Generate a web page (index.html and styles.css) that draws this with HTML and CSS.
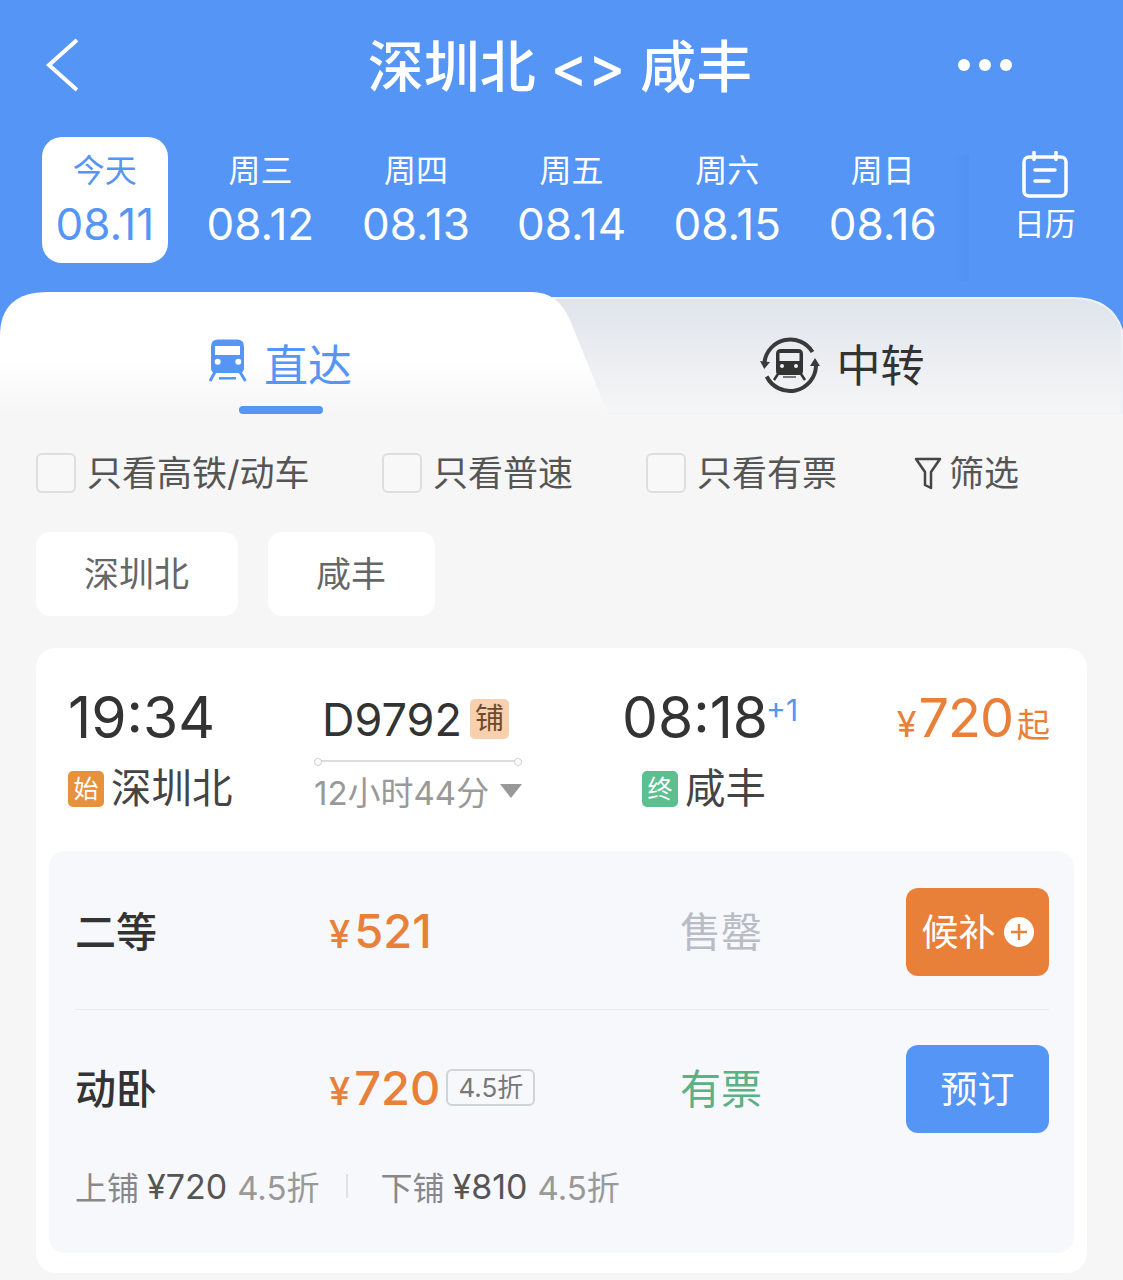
FILE: index.html
```html
<!DOCTYPE html>
<html lang="zh-CN">
<head>
    <meta charset="UTF-8">
    <meta name="viewport" content="width=device-width, initial-scale=1.0">
    <title>深圳北 - 咸丰</title>
    <link rel="stylesheet" href="styles.css">
</head>
<body>
<div class="page">

    <!-- Blue header -->
    <div class="header">
        <div class="title-bar">
            <svg class="back-icon" width="40" height="60" viewBox="0 0 40 60"><polyline points="33,5 5,30 33,55" fill="none" stroke="#fff" stroke-width="4"/></svg>
            <div class="title">深圳北 &lt;&gt; 咸丰</div>
            <div class="more-dots"><span></span><span></span><span></span></div>
        </div>
        <div class="date-row">
            <div class="date-cell active"><div class="day">今天</div><div class="date">08.11</div></div>
            <div class="date-cell"><div class="day">周三</div><div class="date">08.12</div></div>
            <div class="date-cell"><div class="day">周四</div><div class="date">08.13</div></div>
            <div class="date-cell"><div class="day">周五</div><div class="date">08.14</div></div>
            <div class="date-cell"><div class="day">周六</div><div class="date">08.15</div></div>
            <div class="date-cell"><div class="day">周日</div><div class="date">08.16</div></div>
            <div class="calendar-cell">
                <svg width="48" height="48" viewBox="0 0 48 48" fill="none" stroke="#fff" stroke-width="3.5"><rect x="3" y="6" width="42" height="39" rx="5"/><path d="M13 1.5v7M35 1.5v7M14 19h20M14 30h14" stroke-linecap="round"/></svg>
                <div class="calendar-label">日历</div>
            </div>
        </div>
    </div>

    <!-- Direct / transfer tabs -->
    <div class="tabs">
        <svg class="tabs-bg" width="1123" height="122" viewBox="0 0 1123 122">
            <defs>
                <linearGradient id="tabLeft" x1="0" y1="0" x2="0" y2="1"><stop offset="0.55" stop-color="#fff"/><stop offset="1" stop-color="#f6f6f6"/></linearGradient>
                <linearGradient id="tabRight" x1="0" y1="0" x2="0" y2="1"><stop offset="0" stop-color="#dfe4ec"/><stop offset="1" stop-color="#f6f6f6"/></linearGradient>
            </defs>
            <path d="M520 6H1072Q1112 6 1122 38V122H520Z" fill="url(#tabRight)" stroke="#eef1f6" stroke-width="2"/>
            <path d="M0 122V44Q0 0 48 0H532Q558 0 570 28L608 122Z" fill="url(#tabLeft)"/>
        </svg>
        <div class="tab tab-active">
            <div class="tab-label">
                <svg width="38" height="44" viewBox="0 0 38 44"><path d="M9 0.5H28Q35 0.5 35 7.5V29Q35 34 30 34H7Q2 34 2 29V7.5Q2 0.5 9 0.5ZM6 7V16H31V7Z" fill="#5595f5" fill-rule="evenodd"/><circle cx="8.7" cy="22.7" r="3" fill="#fff"/><circle cx="29.3" cy="22.7" r="3" fill="#fff"/><path d="M6 33L1 42M31 33L36.500 42" fill="none" stroke="#5595f5" stroke-width="3"/><path d="M10 39.300H27" fill="none" stroke="#5595f5" stroke-width="2.500"/></svg>
                <span>直达</span>
            </div>
            <div class="tab-line"></div>
        </div>
        <div class="tab">
            <div class="tab-label">
                <svg class="transfer-icon" width="60" height="60" viewBox="0 0 60 60"><path d="M4.500 27A26 26 0 0 1 52.500 17M56 31A26 26 0 0 1 6.700 41.500" fill="none" stroke="#3a3a3a" stroke-width="4"/><path d="M0 26L10 27L4.300 34ZM55 23L60 31L50 31Z" fill="#3a3a3a"/><path d="M21 14H38Q43 14 43 19V36Q43 40 39 40H20Q16 40 16 36V19Q16 14 21 14ZM19.500 18V26H39.500V18Z" fill="#333" fill-rule="evenodd"/><circle cx="22" cy="31" r="2" fill="#f2f3f5"/><circle cx="36" cy="31" r="2" fill="#f2f3f5"/><path d="M18 39L14 45M41 39L45 45" fill="none" stroke="#333" stroke-width="2.500"/><path d="M23 42H36" fill="none" stroke="#777" stroke-width="2"/></svg>
                <span>中转</span>
            </div>
        </div>
    </div>

    <!-- Filter checkboxes -->
    <div class="filters">
        <div class="check-item item-one"><span class="checkbox"></span><span class="check-text">只看高铁/动车</span></div>
        <div class="check-item item-two"><span class="checkbox"></span><span class="check-text">只看普速</span></div>
        <div class="check-item item-three"><span class="checkbox"></span><span class="check-text">只看有票</span></div>
        <div class="filter-btn">
            <svg width="28" height="34" viewBox="0 0 28 34"><path d="M2 3H26L17 16V32L11 29V16Z" fill="none" stroke="#444" stroke-width="2.500" stroke-linejoin="round"/></svg>
            <span class="check-text">筛选</span>
        </div>
    </div>

    <div class="stations">
        <div class="station-chip">深圳北</div>
        <div class="station-chip">咸丰</div>
    </div>

    <!-- Train card -->
    <div class="card">
        <div class="train-info">
            <div class="cell">
                <div class="time">19:34</div>
                <div class="place"><span class="mark mark-start">始</span>深圳北</div>
            </div>
            <div class="cell">
                <div class="train-no">D9792<span class="berth-tag">铺</span></div>
                <div class="duration-line"></div>
                <div class="duration">12小时44分<span class="arrow-down"></span></div>
            </div>
            <div class="cell">
                <div class="time">08:18<span class="plus-day">+1</span></div>
                <div class="place place-end"><span class="mark mark-end">终</span>咸丰</div>
            </div>
            <div class="cell cell-price">
                <div class="lowest"><span class="yen">¥</span><span class="lowest-num">720</span><span class="qi">起</span></div>
            </div>
        </div>

        <div class="seats">
            <div class="seat-row seat-row-line">
                <div class="seat-name">二等</div>
                <div class="seat-price"><span class="yen">¥</span>521</div>
                <div class="seat-status sold-out">售罄</div>
                <div class="btn btn-wait">候补<svg width="30" height="30" viewBox="0 0 30 30"><circle cx="15" cy="15" r="15" fill="#fff"/><path d="M15 7V23M7 15H23" stroke="#e8803a" stroke-width="2.500"/></svg></div>
            </div>
            <div class="seat-row">
                <div class="seat-name">动卧</div>
                <div class="seat-price"><span class="yen">¥</span>720<span class="discount">4.5折</span></div>
                <div class="seat-status available">有票</div>
                <div class="btn btn-book">预订</div>
            </div>
            <div class="berths">
                <span class="berth-name">上铺</span><span class="berth-price">¥720</span><span class="berth-off">4.5折</span>
                <span class="berth-sep"></span>
                <span class="berth-name">下铺</span><span class="berth-price">¥810</span><span class="berth-off">4.5折</span>
            </div>
        </div>
    </div>

</div>
</body>
</html>
```

FILE: styles.css
```css
/* Basic Reset */
* {
    margin: 0;
    padding: 0;
    box-sizing: border-box;
}

body {
    font-family: "Inter", "Noto Sans CJK SC", sans-serif;
    background-color: #f6f6f6;
    color: #333;
}

.page {
    width: 1123px;
    height: 1280px;
    overflow: hidden;
    background-color: #f6f6f6;
}

/* Header */
.header {
    height: 292px;
    background-color: #5595f5;
    color: #fff;
}

.title-bar {
    height: 137px;
    padding: 0 111px 8px 44px;
    display: grid;
    grid-template-columns: 1fr auto 1fr;
    align-items: center;
}

.title {
    font-size: 56px;
    font-weight: 500;
    margin: 0 0 4px 64px;
    white-space: pre;
}

.more-dots {
    display: flex;
    justify-content: flex-end;
    gap: 9px;
}

.more-dots span {
    width: 12px;
    height: 12px;
    border-radius: 50%;
    background-color: #fff;
}

.date-row {
    display: grid;
    grid-template-columns: repeat(6, 155.6px) 1fr;
    padding-left: 27px;
}

.date-cell {
    width: 126px;
    height: 126px;
    margin: 0 auto;
    border-radius: 20px;
    display: flex;
    flex-direction: column;
    align-items: center;
    padding-top: 12px;
}

.date-cell.active {
    background-color: #fff;
    color: #5595f5;
}

.day {
    font-size: 32px;
    line-height: 44px;
}

.date {
    font-size: 44px;
    line-height: 62px;
}

.calendar-cell {
    position: relative;
    display: flex;
    flex-direction: column;
    align-items: center;
    padding: 14px 0 0 6px;
}

/* faint shadow between the dates and the calendar */
.calendar-cell::before {
    content: "";
    position: absolute;
    left: -10px;
    top: 18px;
    width: 18px;
    height: 126px;
    background: linear-gradient(to right, #5595f5, #5191f1);
}

.calendar-label {
    font-size: 31px;
    line-height: 50px;
}

/* Tabs */
.tabs {
    position: relative;
    height: 122px;
    display: grid;
    grid-template-columns: 561px 562px;
    background: linear-gradient(#5595f5 44px, #f6f6f6 44px);
}

.tabs-bg {
    position: absolute;
    left: 0;
    top: 0;
}

.tab {
    position: relative;
    display: flex;
    flex-direction: column;
    align-items: center;
    padding-top: 43px;
}

.tab-label {
    height: 60px;
    margin-top: -4px;
    display: flex;
    align-items: center;
    gap: 17px;
    font-size: 44px;
    color: #333;
}

.tab-label span {
    padding-top: 4px;
}

.transfer-icon {
    margin-top: 8px;
}

.tab-active .tab-label {
    color: #5595f5;
}

.tab-line {
    width: 84px;
    height: 8px;
    margin-top: 15px;
    border-radius: 4px;
    background-color: #5595f5;
}

/* Filters */
.filters {
    display: flex;
    align-items: center;
    height: 40px;
    margin-top: 39px;
    padding-left: 36px;
    font-size: 35px;
    color: #555;
}

.check-item {
    display: flex;
    align-items: center;
    gap: 11px;
}

.check-text {
    margin-bottom: 6px;
}

.item-one {
    width: 346px;
}

.item-two {
    width: 264px;
}

.item-three {
    width: 268px;
}

.checkbox {
    width: 40px;
    height: 40px;
    border: 2px solid #dedede;
    border-radius: 6px;
    background-color: #f8f8f8;
}

.filter-btn {
    display: flex;
    align-items: center;
    gap: 7px;
}

.stations {
    display: flex;
    gap: 30px;
    margin-top: 39px;
    padding-left: 36px;
}

.station-chip {
    height: 84px;
    padding: 0 49px 6px 48px;
    border-radius: 14px;
    background-color: #fff;
    display: flex;
    align-items: center;
    font-size: 35px;
    color: #666;
}

/* Train card */
.card {
    width: 1051px;
    height: 625px;
    margin: 32px 0 0 36px;
    padding: 0 13px;
    border-radius: 20px;
    background-color: #fff;
}

.train-info {
    height: 203px;
    padding: 36px 24px 0 19px;
    display: grid;
    grid-template-columns: 246px 308px 1fr 240px;
}

.time {
    font-size: 57px;
    line-height: 68px;
    color: #333;
    display: flex;
}

.plus-day {
    font-size: 30px;
    line-height: 52px;
    color: #5595f5;
    margin-left: -2px;
}

.place {
    display: flex;
    align-items: center;
    gap: 7px;
    margin-top: 2px;
    font-size: 40.5px;
    line-height: 70px;
    color: #444;
}

.place-end {
    padding-left: 20px;
}

.mark {
    width: 36px;
    height: 36px;
    border-radius: 5px;
    color: #fff;
    font-size: 25px;
    line-height: 36px;
    text-align: center;
}

.mark-start {
    background-color: #e8913c;
}

.mark-end {
    background-color: #5bbf8f;
}

.train-no {
    width: 220px;
    height: 68px;
    padding: 2px 0 0 8px;
    display: flex;
    align-items: center;
    gap: 8px;
    font-size: 45px;
    color: #333;
}

.berth-tag {
    width: 39px;
    height: 40px;
    border-radius: 5px;
    background-color: #f8d0ad;
    color: #6b4a2f;
    font-size: 29px;
    line-height: 40px;
    text-align: center;
}

.duration-line {
    position: relative;
    width: 208px;
    height: 2px;
    margin-top: 8px;
    background-color: #dcdcdc;
}

/* small open dots at both ends of the line */
.duration-line::before,
.duration-line::after {
    content: "";
    position: absolute;
    top: -2px;
    width: 6px;
    height: 6px;
    border: 1px solid #d0d0d0;
    border-radius: 50%;
    background-color: #fff;
}

.duration-line::before {
    left: 0;
}

.duration-line::after {
    right: 0;
}

.duration {
    display: flex;
    align-items: center;
    width: 220px;
    height: 58px;
    font-size: 33px;
    color: #999;
    white-space: nowrap;
}

.arrow-down {
    margin-left: 11px;
    border-left: 11px solid transparent;
    border-right: 11px solid transparent;
    border-top: 14px solid #999;
}

.cell-price {
    display: flex;
    justify-content: flex-end;
}

.lowest {
    height: 68px;
    display: flex;
    align-items: baseline;
    color: #e8803a;
}

.lowest .yen {
    font-size: 36px;
    margin-right: 2px;
}

.lowest-num {
    font-size: 54px;
    line-height: 68px;
    letter-spacing: -1px;
}

.qi {
    font-size: 33px;
    margin-left: 4px;
}

/* Seats panel */
.seats {
    height: 402px;
    padding: 1px 25px 0 26px;
    border-radius: 16px;
    background-color: #f6f8fb;
}

.seat-row {
    height: 158px;
    display: grid;
    grid-template-columns: 254px 351px 226px 143px;
    align-items: center;
}

.seat-row-line {
    padding-top: 3px;
    border-bottom: 1px solid #e9ebef;
}

.seat-name {
    font-size: 41px;
    font-weight: 500;
    color: #333;
    padding-bottom: 6px;
}

.seat-price {
    display: flex;
    align-items: baseline;
    font-size: 47px;
    font-weight: 500;
    color: #e8803a;
    padding-bottom: 4px;
}

.seat-price .yen {
    font-size: 38px;
    margin-right: 4px;
}

.discount {
    align-self: center;
    margin-left: 6px;
    width: 89px;
    height: 37px;
    border: 2px solid #cfd3da;
    border-radius: 6px;
    font-size: 26px;
    font-weight: 400;
    line-height: 33px;
    text-align: center;
    color: #777;
}

.seat-status {
    font-size: 41px;
    padding-bottom: 6px;
}

.sold-out {
    color: #b9bcc4;
}

.available {
    color: #5bb184;
}

.btn {
    height: 88px;
    padding-bottom: 4px;
    border-radius: 12px;
    color: #fff;
    display: flex;
    align-items: center;
    justify-content: center;
    gap: 8px;
    font-size: 37px;
}

.btn svg {
    margin-top: 4px;
}

.btn-wait {
    background-color: #e8803a;
}

.btn-book {
    background-color: #5595f5;
}

.berths {
    display: flex;
    align-items: center;
    height: 40px;
    margin-top: -2px;
    font-size: 32px;
}

.berth-name {
    color: #888;
}

.berth-price {
    font-size: 34px;
    color: #555;
    margin-left: 8px;
}

.berth-off {
    font-size: 33px;
    color: #999;
    margin-left: 10px;
}

.berth-sep {
    width: 2px;
    height: 24px;
    margin: 0 32px 0 27px;
    background-color: #e0e2e6;
}
```
